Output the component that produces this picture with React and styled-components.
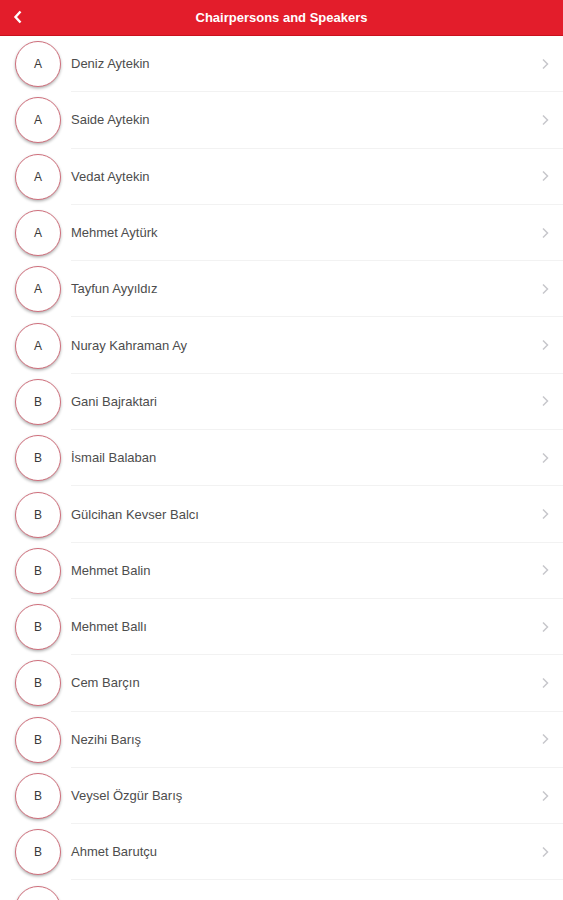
import React from "react";
import styled, { createGlobalStyle } from "styled-components";

const GlobalStyle = createGlobalStyle`
  body {
    margin: 0;
    background: #ffffff;
    font-family: "Liberation Sans", Arial, sans-serif;
  }
`;

const Page = styled.div`
  width: 563px;
  height: 900px;
  overflow: hidden;
  background: #ffffff;
`;

const Header = styled.div`
  height: 35px;
  background: #e31d2b;
  border-bottom: 1px solid #c9111d;
  display: flex;
  align-items: center;
  justify-content: center;
  position: relative;
`;

const BackButton = styled.div`
  position: absolute;
  left: 13px;
  top: 10px;
  width: 14px;
  height: 14px;
  display: flex;
  align-items: center;
`;

const Title = styled.h1`
  margin: 0;
  font-size: 13px;
  font-weight: 700;
  color: #ffffff;
`;

const List = styled.div`
  display: flex;
  flex-direction: column;
`;

const Row = styled.div`
  height: 56.3px;
  display: flex;
  align-items: center;
  padding-left: 15px;
  flex-shrink: 0;
`;

const Avatar = styled.div`
  width: 44px;
  height: 44px;
  border-radius: 50%;
  border: 1.5px solid #cf6f7c;
  box-shadow: 0 1.5px 3px rgba(0, 0, 0, 0.3);
  display: flex;
  align-items: center;
  justify-content: center;
  font-size: 12px;
  color: #3a3a3a;
  flex-shrink: 0;
  background: #ffffff;
`;

const RowBody = styled.div`
  flex: 1;
  height: 100%;
  margin-left: 10px;
  display: flex;
  align-items: center;
  justify-content: space-between;
  padding-right: 14px;
  border-bottom: 1px solid #f2f2f2;
  box-sizing: border-box;
`;

const Name = styled.span`
  font-size: 13px;
  color: #4d4d4d;
`;

const Chevron = () => (
  <svg width="8" height="12" viewBox="0 0 8 12">
    <path d="M2 1.5 L6.5 6 L2 10.5" fill="none" stroke="#c7c7cc" strokeWidth="1.5" />
  </svg>
);

const people = [
  ["A", "Deniz Aytekin"],
  ["A", "Saide Aytekin"],
  ["A", "Vedat Aytekin"],
  ["A", "Mehmet Aytürk"],
  ["A", "Tayfun Ayyıldız"],
  ["A", "Nuray Kahraman Ay"],
  ["B", "Gani Bajraktari"],
  ["B", "İsmail Balaban"],
  ["B", "Gülcihan Kevser Balcı"],
  ["B", "Mehmet Balin"],
  ["B", "Mehmet Ballı"],
  ["B", "Cem Barçın"],
  ["B", "Nezihi Barış"],
  ["B", "Veysel Özgür Barış"],
  ["B", "Ahmet Barutçu"],
  ["", ""],
];

const App = () => (
  <Page>
    <GlobalStyle />
    <Header>
      <BackButton>
        <svg width="10" height="14" viewBox="0 0 10 14">
          <path d="M7.5 1.5 L2.5 7 L7.5 12.5" fill="none" stroke="#ffffff" strokeWidth="2.4" />
        </svg>
      </BackButton>
      <Title>Chairpersons and Speakers</Title>
    </Header>
    <List>
      {people.map(([letter, name], i) => (
        <Row key={i}>
          <Avatar>{letter}</Avatar>
          <RowBody>
            <Name>{name}</Name>
            <Chevron />
          </RowBody>
        </Row>
      ))}
    </List>
  </Page>
);

export default App;
